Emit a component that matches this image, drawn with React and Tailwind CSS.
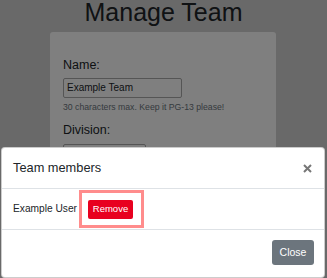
export default function App() {
  return (
    <div className="relative w-[327px] h-[278px] overflow-hidden bg-[#d3d3d3] font-['Liberation_Sans',Arial,sans-serif] text-[#212529]">
      <h1 className="text-center text-[25px] leading-none h-[32px]">Manage Team</h1>
      <div className="ml-[50px] w-[226px] h-[200px] bg-white rounded-[3px] pt-[26px] px-[13px]">
        <label className="block text-[12.5px] leading-[15px]">Name:</label>
        <div className="mt-[5px] w-[119px] h-[20px] border border-[#aaa] rounded-[2px] px-[3px] text-[10px] leading-[18px]">
          Example Team
        </div>
        <p className="mt-[4px] text-[8.7px] leading-[10px] text-[#6c757d]">30 characters max. Keep it PG-13 please!</p>
        <label className="block mt-[11px] text-[12.5px] leading-[15px]">Division:</label>
        <div className="mt-[6px] w-[83px] h-[20px] border border-[#aaa] rounded-[2px] px-[3px] text-[10px] leading-[18px]">
          Happy Division
        </div>
      </div>

      <div className="absolute inset-0 bg-black/50" />

      <div className="absolute left-[1px] top-[147px] w-[324px] h-[131px] bg-white rounded-[4px] border border-black/20 flex flex-col">
        <div className="h-[41px] flex items-center justify-between px-[11px] border-b border-[#dee2e6]">
          <span className="text-[12.8px]">Team members</span>
          <svg width="9" height="9" viewBox="0 0 9 9" className="mr-[1px]">
            <path d="M1 1L8 8M8 1L1 8" stroke="#777" strokeWidth="2" />
          </svg>
        </div>
        <div className="h-[41px] flex items-center px-[11px] border-b border-[#dee2e6]">
          <span className="text-[10.2px]">Example User</span>
          <div className="ml-[2px] border-[3px] border-[#ff8c8c] pl-[6px] pr-[8px] pt-[7px] pb-[6px]">
            <div className="w-[45px] h-[19px] bg-[#e8001f] rounded-[2px] text-white text-[9.5px] flex items-center justify-center">
              Remove
            </div>
          </div>
        </div>
        <div className="flex-1 flex justify-end items-start pt-[10px] pr-[10px]">
          <div className="w-[42px] h-[25px] bg-[#6c757d] rounded-[3px] text-white text-[10.5px] flex items-center justify-center">
            Close
          </div>
        </div>
      </div>
    </div>
  );
}
